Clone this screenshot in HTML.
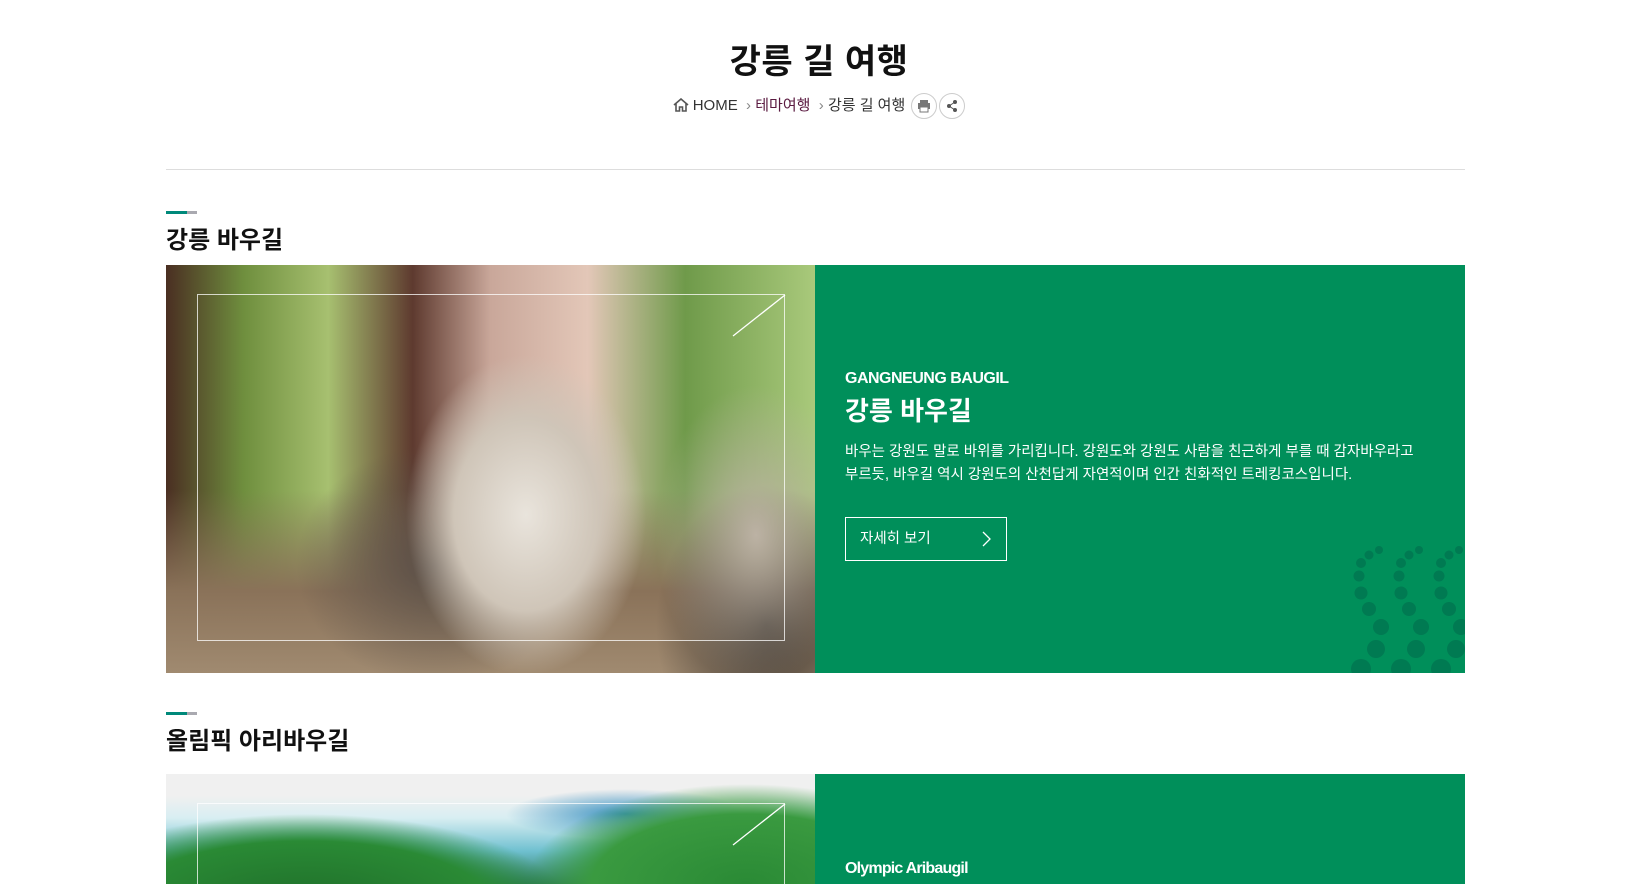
<!DOCTYPE html>
<html><head><meta charset="utf-8"><style>
*{margin:0;padding:0;box-sizing:border-box}
body{width:1638px;height:884px;overflow:hidden;background:#fff;font-family:"Liberation Sans","Noto Sans CJK KR",sans-serif;color:#111;position:relative}
.abs{position:absolute}
h1{position:absolute;left:0;width:1638px;top:39px;text-align:center;font-size:34px;font-weight:700;letter-spacing:0.5px;line-height:46px}
.bc{position:absolute;left:0;width:1638px;top:93px;text-align:center;font-size:15px;color:#333;line-height:22px}
.bc span{vertical-align:middle}
.circ{display:inline-block;width:26px;height:26px;border:1px solid #ccc;border-radius:50%;vertical-align:middle;margin-left:2px;position:relative}
.bar{position:absolute;width:31px;height:3px;background:linear-gradient(90deg,#00897a 0 21px,#a9a9b0 21px)}
.h2{position:absolute;left:166px;font-size:24px;font-weight:700;line-height:30px}
.green{position:absolute;background:#008f5a;left:815px;width:650px}
.photo{position:absolute;left:166px;width:649px;overflow:hidden}
.frame{position:absolute;border:1.5px solid rgba(255,255,255,.75)}
</style></head><body>
<h1>강릉 길 여행</h1>
<div class="bc"><span><svg width="16" height="14" viewBox="0 0 16 14" style="vertical-align:-2px"><path d="M1 7L8 1l7 6M3 5.5V13h3.5V9h3v4H13V5.5" fill="none" stroke="#555" stroke-width="1.6"/></svg> HOME</span> <span style="color:#888">&nbsp;›&nbsp;</span><span style="color:#5a1a40">테마여행</span> <span style="color:#888">&nbsp;›&nbsp;</span><span>강릉 길 여행</span>
<span class="circ"><svg width="14" height="14" viewBox="0 0 14 14" style="position:absolute;left:5px;top:5px"><rect x="3" y="1" width="8" height="3" fill="#777"/><rect x="1" y="4" width="12" height="6" fill="#777"/><rect x="3" y="8" width="8" height="5" fill="#fff" stroke="#777"/></svg></span><span class="circ"><svg width="14" height="14" viewBox="0 0 14 14" style="position:absolute;left:5px;top:5px"><circle cx="10" cy="3" r="2" fill="#555"/><circle cx="4" cy="7" r="2" fill="#555"/><circle cx="10" cy="11" r="2" fill="#555"/><path d="M10 3L4 7l6 4" stroke="#555" fill="none"/></svg></span></div>
<div class="abs" style="left:166px;top:169px;width:1299px;height:1px;background:#ddd"></div>

<div class="bar" style="left:166px;top:211px"></div>
<div class="h2" style="top:226px">강릉 바우길</div>
<div class="photo" style="top:265px;height:408px;background:
radial-gradient(ellipse 120px 160px at 360px 250px,#e9e4dc 0,#cfc5b8 60%,transparent 100%),
radial-gradient(ellipse 100px 150px at 590px 270px,#bcb2a4 0,transparent 100%),
radial-gradient(ellipse 140px 120px at 270px 300px,#5b5048 0,transparent 100%),
radial-gradient(ellipse 110px 140px at 600px 360px,#3a332d 0,transparent 100%),
linear-gradient(180deg,transparent 55%,#8a7259 80%,#a08a70 100%),
linear-gradient(90deg,#4a2e22 0,#6f8f3e 12%,#a7c070 25%,#5e3a2f 38%,#c9a79a 50%,#e3c7b8 65%,#6f9a4a 80%,#a9c97b 100%)">
<div class="frame" style="left:31px;top:29px;width:588px;height:347px"></div>
<svg class="abs" style="left:565px;top:29px" width="55" height="44"><path d="M54 1L2 42" stroke="#fff" stroke-width="1.3"/></svg>
</div>
<div class="green" style="top:265px;height:408px;overflow:hidden">
<div class="abs" style="left:30px;top:105px;color:#fff;font-size:16px;font-weight:700;letter-spacing:-0.5px">GANGNEUNG BAUGIL</div>
<div class="abs" style="left:30px;top:126px;color:#fff;font-size:26px;font-weight:700">강릉 바우길</div>
<div class="abs" style="left:30px;top:176px;width:600px;color:#fff;font-size:14.5px;line-height:23px">바우는 강원도 말로 바위를 가리킵니다. 강원도와 강원도 사람을 친근하게 부를 때 감자바우라고<br>부르듯, 바우길 역시 강원도의 산천답게 자연적이며 인간 친화적인 트레킹코스입니다.</div>
<div class="abs" style="left:30px;top:252px;width:162px;height:44px;border:1px solid #fff;color:#fff;font-size:14.5px;line-height:42px;padding-left:14px">자세히 보기<svg class="abs" style="right:14px;top:13px" width="10" height="16"><path d="M1 1l7 7-7 7" stroke="#fff" fill="none" stroke-width="1.3"/></svg></div>
<svg class="abs" style="left:534px;top:280px" width="120" height="130"><g fill="#007a52">
<circle cx="30" cy="5" r="4"/><circle cx="20" cy="10" r="4.5"/><circle cx="12" cy="18" r="5"/><circle cx="10" cy="31" r="5.5"/><circle cx="12" cy="48" r="6.5"/><circle cx="20" cy="64" r="7"/><circle cx="32" cy="82" r="8"/><circle cx="27" cy="104" r="9"/><circle cx="12" cy="124" r="10"/>
<circle cx="70" cy="5" r="4"/><circle cx="60" cy="10" r="4.5"/><circle cx="52" cy="18" r="5"/><circle cx="50" cy="31" r="5.5"/><circle cx="52" cy="48" r="6.5"/><circle cx="60" cy="64" r="7"/><circle cx="72" cy="82" r="8"/><circle cx="67" cy="104" r="9"/><circle cx="52" cy="124" r="10"/>
<circle cx="110" cy="5" r="4"/><circle cx="100" cy="10" r="4.5"/><circle cx="92" cy="18" r="5"/><circle cx="90" cy="31" r="5.5"/><circle cx="92" cy="48" r="6.5"/><circle cx="100" cy="64" r="7"/><circle cx="112" cy="82" r="8"/><circle cx="107" cy="104" r="9"/><circle cx="92" cy="124" r="10"/></g></svg>
</div>

<div class="bar" style="left:166px;top:712px"></div>
<div class="h2" style="top:727px">올림픽 아리바우길</div>
<div class="photo" style="top:774px;height:110px;background:
radial-gradient(ellipse 260px 90px at 140px 130px,#1f6f2a 0,#2a8a35 70%,transparent 100%),
radial-gradient(ellipse 220px 100px at 580px 110px,#2a8a35 0,#3a9a40 70%,transparent 100%),
radial-gradient(ellipse 120px 25px at 460px 40px,#3a90c0 0,transparent 100%),
linear-gradient(180deg,#f0f0f0 0 20%,#d8eef2 40%,#6fc0d0 70%,#2e7a5a 100%)">
<div class="frame" style="left:31px;top:29px;width:588px;height:120px"></div>
<svg class="abs" style="left:565px;top:29px" width="55" height="44"><path d="M54 1L2 42" stroke="#fff" stroke-width="1.3"/></svg>
</div>
<div class="green" style="top:774px;height:110px">
<div class="abs" style="left:30px;top:86px;color:#fff;font-size:16px;font-weight:700;letter-spacing:-0.8px">Olympic Aribaugil</div>
</div>
</body></html>
